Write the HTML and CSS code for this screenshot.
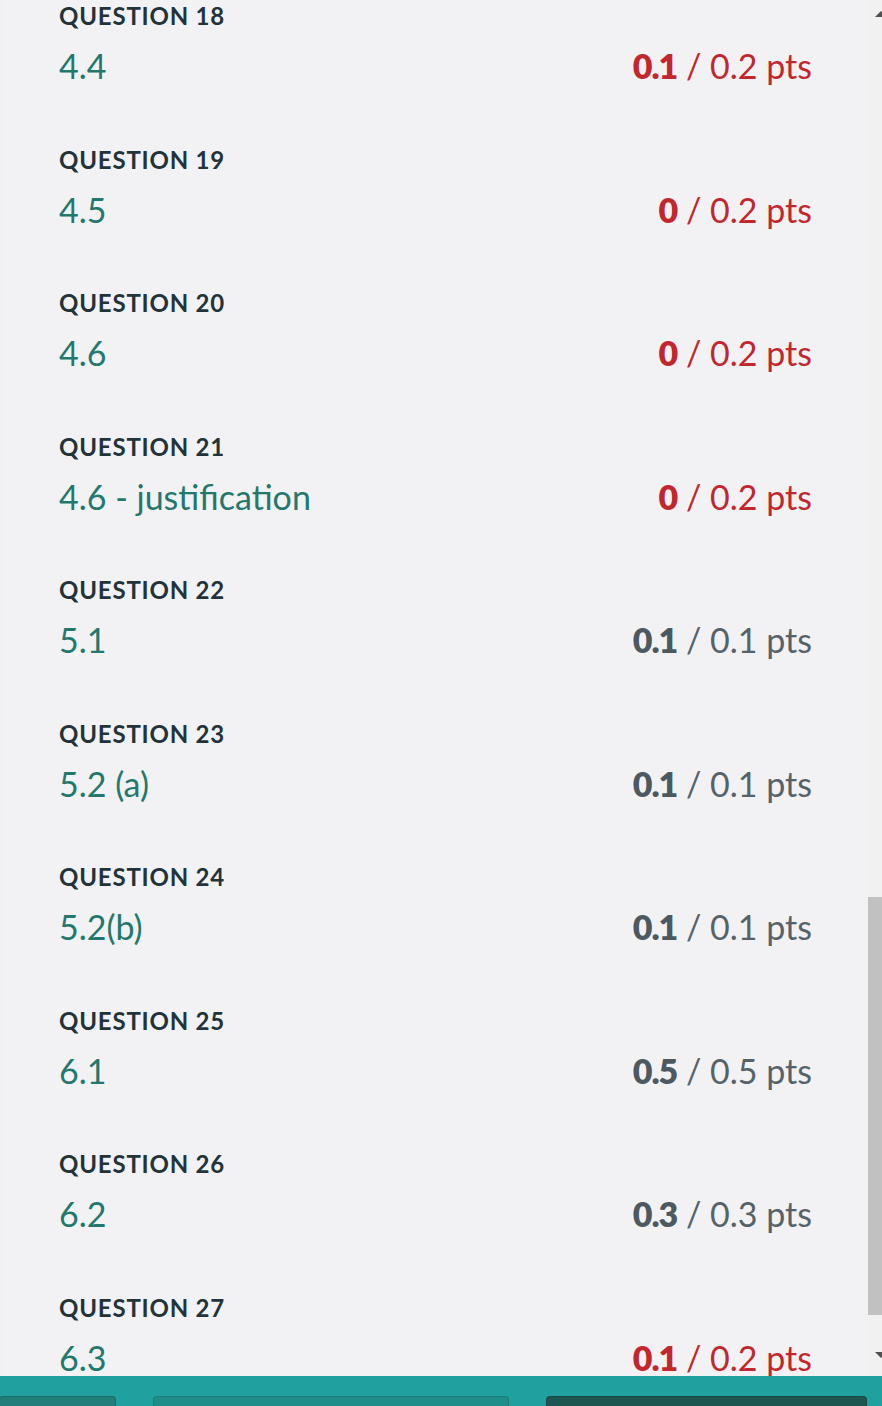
FILE: index.html
```html
<!DOCTYPE html>
<html lang="en">
<head>
<meta charset="utf-8">
<title>Quiz results</title>
<link rel="stylesheet" href="styles.css">
</head>
<body>
<div class="page">
  <div class="viewport">
    <main class="content">
      <section class="q">
        <div class="q-label">QUESTION 18</div>
        <div class="q-row"><span class="q-name">4.4</span><span class="pts bad"><b>0.1</b> / 0.2 pts</span></div>
      </section>
      <section class="q">
        <div class="q-label">QUESTION 19</div>
        <div class="q-row"><span class="q-name">4.5</span><span class="pts bad"><b>0</b> / 0.2 pts</span></div>
      </section>
      <section class="q">
        <div class="q-label">QUESTION 20</div>
        <div class="q-row"><span class="q-name">4.6</span><span class="pts bad"><b>0</b> / 0.2 pts</span></div>
      </section>
      <section class="q">
        <div class="q-label">QUESTION 21</div>
        <div class="q-row"><span class="q-name">4.6 - justification</span><span class="pts bad"><b>0</b> / 0.2 pts</span></div>
      </section>
      <section class="q">
        <div class="q-label">QUESTION 22</div>
        <div class="q-row"><span class="q-name">5.1</span><span class="pts ok"><b>0.1</b> / 0.1 pts</span></div>
      </section>
      <section class="q">
        <div class="q-label">QUESTION 23</div>
        <div class="q-row"><span class="q-name">5.2 (a)</span><span class="pts ok"><b>0.1</b> / 0.1 pts</span></div>
      </section>
      <section class="q">
        <div class="q-label">QUESTION 24</div>
        <div class="q-row"><span class="q-name">5.2(b)</span><span class="pts ok"><b>0.1</b> / 0.1 pts</span></div>
      </section>
      <section class="q">
        <div class="q-label">QUESTION 25</div>
        <div class="q-row"><span class="q-name">6.1</span><span class="pts ok"><b>0.5</b> / 0.5 pts</span></div>
      </section>
      <section class="q">
        <div class="q-label">QUESTION 26</div>
        <div class="q-row"><span class="q-name">6.2</span><span class="pts ok"><b>0.3</b> / 0.3 pts</span></div>
      </section>
      <section class="q">
        <div class="q-label">QUESTION 27</div>
        <div class="q-row"><span class="q-name">6.3</span><span class="pts bad"><b>0.1</b> / 0.2 pts</span></div>
      </section>
    </main>
    <div class="scrollbar">
      <div class="arrow-up"></div>
      <div class="track"><div class="thumb"></div></div>
      <div class="arrow-down"></div>
    </div>
  </div>
  <footer class="bar">
    <div class="btn btn-a"></div>
    <div class="btn btn-b"></div>
    <div class="btn btn-c"></div>
  </footer>
</div>
</body>
</html>
```

FILE: styles.css
```css
html, body {
  margin: 0;
  padding: 0;
  height: 100%;
  overflow: hidden;
}
body {
  background: #f2f2f4;
  font-family: Lato, "Open Sans", "Liberation Sans", sans-serif;
}
.page {
  display: flex;
  flex-direction: column;
  height: 1406px;
}
.viewport {
  height: 1376px;
  display: flex;
  overflow: hidden;
}
.content {
  flex: 1;
  padding: 0 55px 0 55px;
  border-left: 4px solid #f0f0f1;
  background: #f2f2f4;
}
.q {
  height: 143.5px;
  box-sizing: border-box;
  padding-top: 1px;
}
.q-label {
  font-size: 24px;
  font-weight: 700;
  line-height: 30px;
  color: #22333a;
  letter-spacing: 0.8px;
}
.q-row {
  display: flex;
  justify-content: space-between;
  align-items: baseline;
  margin-top: 15px;
  line-height: 40px;
  font-size: 34px;
}
.q-name {
  color: #23786d;
}
.pts b {
  font-weight: 800;
  letter-spacing: -1px;
}
.bad { color: #c1272d; }
.ok { color: #56626a; }
.ok b { color: #4c5960; }

.scrollbar {
  width: 15px;
  flex: none;
  background: #f1f1f1;
  display: flex;
  flex-direction: column;
  position: relative;
}
.arrow-up {
  height: 0;
  width: 0;
  margin: 11px 0 0 8px;
  border-left: 6px solid transparent;
  border-right: 6px solid transparent;
  border-bottom: 6px solid #505050;
}
.track {
  flex: 1;
  display: flex;
  flex-direction: column;
  justify-content: flex-end;
  padding-bottom: 37px;
}
.thumb {
  height: 418px;
  margin-left: 1px;
  background: #c1c1c1;
}
.arrow-down {
  height: 0;
  width: 0;
  margin: 0 0 18px 8px;
  border-left: 6px solid transparent;
  border-right: 6px solid transparent;
  border-top: 6px solid #505050;
}
.bar {
  height: 30px;
  background: #21a0a0;
  display: flex;
  align-items: flex-end;
  gap: 37px;
  overflow: hidden;
}
.btn {
  height: 10px;
  border-radius: 4px 4px 0 0;
  box-sizing: border-box;
}
.btn-a {
  width: 117px;
  margin-left: -1px;
  background: #217e79;
  border: 1px solid #1c6c68;
  border-bottom: none;
}
.btn-b {
  width: 356px;
  background: #1f8d8a;
  border: 1px solid #1d7d7a;
  border-bottom: none;
}
.btn-c {
  width: 321px;
  background: #1d5650;
  border: 1px solid #1a4b46;
  border-bottom: none;
}
```
